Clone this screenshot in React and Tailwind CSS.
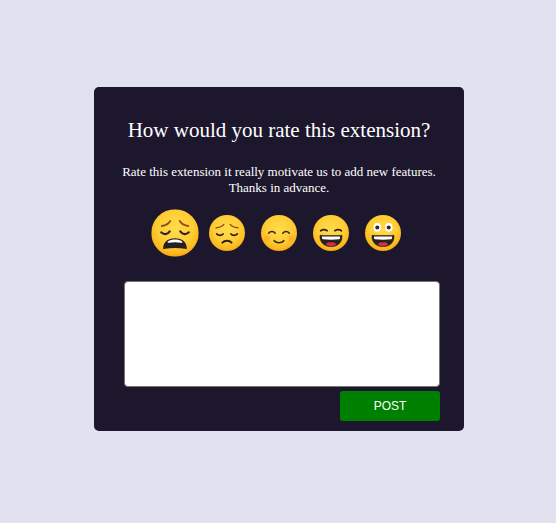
import React, { useState } from 'react';

const stroke = { fill: 'none', strokeLinecap: 'round' };

function Mouth() {
  return (
    <g>
      <path d="M7 20.200c3.500.5 18.500.5 22 0 .6 6.800-3.800 11.400-11 11.400S6.400 27 7 20.200Z" fill="#26201f" stroke="#26201f" strokeWidth="0.600" strokeLinejoin="round" />
      <path d="M9.200 21.400h17.600c.6 0 .5 2.700-.7 2.900-5.400.6-10.800.6-16.200 0-1.200-.2-1.300-2.900-.7-2.900Z" fill="#fff" />
      <path d="M12.800 29.800c1.300-2.700 3.300-2.900 5.200-2.200 1.900-.7 3.900-.5 5.200 2.200-3 1.800-7.400 1.800-10.400 0Z" fill="#d82b45" />
    </g>
  );
}

const FACES = [
  {
    name: 'Terrible',
    art: (
      <g>
        <path d="M8 12.700c2.800-.4 5-1.600 6.400-3.800M28 12.700c-2.800-.4-5-1.600-6.400-3.800" stroke="#8f5217" strokeWidth="1.400" {...stroke} />
        <path d="M7.500 17.500c2.200 2 4.600 1.900 6.500-.7M28.500 17.500c-2.200 2-4.600 1.900-6.500-.7" stroke="#30241c" strokeWidth="1.600" {...stroke} />
        <path d="M9 29.500c.2-4.900 3.800-7.600 9-7.600s8.800 2.700 9 7.600c0 .9-.8.8-1.500.5-4.700-.9-10.300-.9-15 0-.7.3-1.500.4-1.500-.5Z" fill="#26201f" />
        <path d="M12.600 24.500c2.600-2 8.200-2 10.800 0 .5.500.2 1.100-.7.900-3.200-.5-6.200-.5-9.400 0-.9.200-1.200-.4-.7-.9Z" fill="#fff" />
      </g>
    ),
  },
  {
    name: 'Bad',
    art: (
      <g>
        <path d="M7 12.900c3.600-.3 6.100-1.300 7.800-3.500M29 12.900c-3.600-.3-6.100-1.300-7.800-3.500" stroke="#8a5216" strokeWidth="1.400" {...stroke} />
        <path d="M7.700 18.900c2 2.100 4.800 1.900 6.400.1M28.300 18.900c-2 2.100-4.800 1.900-6.400.1" stroke="#2c2119" strokeWidth="1.700" {...stroke} />
        <path d="M13.400 27.700c2.200-2.600 7-2.600 9.200 0" stroke="#2c2119" strokeWidth="1.800" {...stroke} />
      </g>
    ),
  },
  {
    name: 'Okay',
    art: (
      <g>
        <circle cx="6" cy="23" r="4.500" fill="url(#cheek)" />
        <circle cx="30" cy="23" r="4.500" fill="url(#cheek)" />
        <path d="M7.700 18.200c1.700-2.200 4.800-2.200 6.500 0M21.800 18.200c1.700-2.200 4.800-2.200 6.500 0" stroke="#3a2a1c" strokeWidth="1.600" {...stroke} />
        <path d="M13.200 25.700c2 2.700 7.600 2.700 9.600 0" stroke="#3a2a1c" strokeWidth="1.700" {...stroke} />
      </g>
    ),
  },
  {
    name: 'Good',
    art: (
      <g>
        <path d="M7.600 15.800c2-1.300 4.600-1.300 6.600-.1M28.400 15.800c-2-1.300-4.600-1.300-6.600-.1" stroke="#30241c" strokeWidth="1.700" {...stroke} />
        <Mouth />
      </g>
    ),
  },
  {
    name: 'Great',
    art: (
      <g>
        <ellipse cx="12.200" cy="12.400" rx="3.700" ry="4.400" fill="#fff" />
        <ellipse cx="23.800" cy="12.400" rx="3.700" ry="4.400" fill="#fff" />
        <circle cx="12.300" cy="12.600" r="2" fill="#302623" />
        <circle cx="23.700" cy="12.600" r="2" fill="#302623" />
        <Mouth />
      </g>
    ),
  },
];

function Face({ art }) {
  return (
    <svg viewBox="0 0 36 36" className="block size-9" aria-hidden="true">
      <defs>
        <radialGradient id="skin" cx="0.5" cy="0.4" r="0.62">
          <stop offset="0" stopColor="#ffdb4d" />
          <stop offset="0.6" stopColor="#ffcd35" />
          <stop offset="0.85" stopColor="#fcb91e" />
          <stop offset="1" stopColor="#f29c12" />
        </radialGradient>
        <radialGradient id="cheek">
          <stop offset="0" stopColor="#ff9028" stopOpacity="0.6" />
          <stop offset="1" stopColor="#ff9028" stopOpacity="0" />
        </radialGradient>
      </defs>
      <circle cx="18" cy="18" r="18" fill="url(#skin)" />
      {art}
    </svg>
  );
}

export default function App() {
  const [rating, setRating] = useState(0);

  return (
    <main className="flex min-h-screen items-center justify-center bg-[#e1e1f0] pb-[5px] pl-0.5 font-['Liberation_Serif',serif] text-white">
      <form
        className="w-full max-w-[370px] rounded-[5px] bg-[#1d172d] px-6 pt-[30px] pb-2.5"
        onSubmit={(e) => e.preventDefault()}
      >
        <div className="text-center">
          <h1 className="text-[21px] leading-[26px]">How would you rate this extension?</h1>
          <p className="mt-[21px] text-[13px] leading-4">
            Rate this extension it really motivate us to add new features.
            <br />
            Thanks in advance.
          </p>
        </div>
        <div className="mt-[19px] flex justify-center gap-4" role="group" aria-label="Rating">
          {FACES.map((face, i) => (
            <button
              key={face.name}
              type="button"
              aria-label={face.name}
              aria-pressed={rating === i}
              onClick={() => setRating(i)}
              className={`size-9 cursor-pointer ${rating === i ? 'scale-[1.32]' : ''}`}
            >
              <Face art={face.art} />
            </button>
          ))}
        </div>
        <div className="mt-[30px] pl-1.5">
          <textarea
            aria-label="Your feedback"
            className="block h-[106px] w-full resize-none rounded-[4px] border border-[#767676] bg-white p-2 text-[13px] text-black"
          />
          <button
            type="submit"
            className="mt-1 ml-auto block h-[30px] w-[100px] cursor-pointer rounded-[3px] bg-[#008000] font-['Liberation_Sans',sans-serif] text-[12px]"
          >
            POST
          </button>
        </div>
      </form>
    </main>
  );
}
